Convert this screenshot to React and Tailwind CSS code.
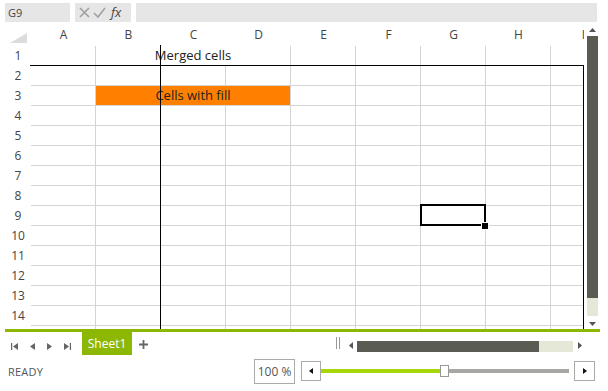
import React from 'react';

const COLS = ['A', 'B', 'C', 'D', 'E', 'F', 'G', 'H', 'I'];
const ROWS = Array.from({ length: 15 }, (_, i) => i + 1);

const cellCls = 'shrink-0 w-[65px] h-[20px] border-r border-b border-[#d4d4d4]';

function Row({ n }) {
  let cells;
  if (n === 1) {
    cells = (
      <>
        <div className={cellCls} />
        <div className="shrink-0 w-[195px] h-[20px] border-r border-b border-[#d4d4d4] flex items-center justify-center text-[13px] text-[#222]">
          Merged cells
        </div>
        {COLS.slice(4).map(c => <div key={c} className={cellCls} />)}
      </>
    );
  } else if (n === 3) {
    cells = (
      <>
        <div className={cellCls} />
        <div className="shrink-0 w-[195px] h-[20px] border-r border-b border-[#d4d4d4] bg-[#ff8000] flex items-center justify-center text-[13px] text-[#222]">
          Cells with fill
        </div>
        {COLS.slice(4).map(c => <div key={c} className={cellCls} />)}
      </>
    );
  } else {
    cells = COLS.map(c => <div key={c} className={cellCls} />);
  }
  return (
    <div className="flex h-[20px]">
      {/* row 15 is only a sliver in view, its number sits below the fold */}
      <div className="shrink-0 w-[31px] pl-[5px] text-center text-[12px] leading-[20px] text-[#444]">{n < 15 ? n : ''}</div>
      {cells}
    </div>
  );
}

export default function App() {
  return (
    <div className="relative w-[608px] h-[391px] bg-white overflow-hidden font-['Open_Sans','Noto_Sans',sans-serif] text-[#444]">
      {/* formula bar */}
      <div className="flex h-[24px] pt-[3px] pl-[5px]">
        <div className="w-[65px] h-[19px] bg-[#e6e6e6] pl-[3px] text-[11px] leading-[19px] text-[#444]">G9</div>
        <div className="ml-[5px] w-[56px] h-[19px] bg-[#e6e6e6] flex items-center pl-[4px] gap-[3px]">
          <svg width="11" height="11" viewBox="0 0 11 11"><path d="M1 1L10 10M10 1L1 10" stroke="#a0a0a0" strokeWidth="1.6" /></svg>
          <svg width="13" height="11" viewBox="0 0 13 11"><path d="M1 6L5 10L12 1" stroke="#a0a0a0" strokeWidth="1.6" fill="none" /></svg>
          <span className="ml-[2px] italic text-[13px] leading-[19px] text-[#444]">fx</span>
        </div>
        <div className="ml-[5px] w-[461px] h-[19px] bg-[#e6e6e6]" />
      </div>

      {/* sheet */}
      <div className="flex h-[305px]">
        <div className="relative w-[584px] overflow-hidden">
          <div className="flex h-[22px] items-center">
            <div className="shrink-0 w-[31px] h-[22px] flex items-end pl-[10px] pb-[3px]">
              <svg width="17" height="10" viewBox="0 0 17 10"><path d="M17 0L17 10L0 10Z" fill="#dcdcdc" /></svg>
            </div>
            {COLS.map(c => (
              <div key={c} className="shrink-0 w-[65px] text-center text-[12px] text-[#444]">{c}</div>
            ))}
          </div>
          {ROWS.map(n => <Row key={n} n={n} />)}

          {/* frame lines */}
          <div className="absolute left-[30px] top-[41px] w-[553px] h-px bg-black" />
          <div className="absolute left-[160px] top-[21px] w-px h-[290px] bg-black" />
          <div className="absolute left-[583px] top-[41px] w-px h-[270px] bg-black" />

          {/* selection G9 */}
          <div className="absolute left-[420px] top-[180px] w-[66px] h-[22px] border-2 border-black" />
          <div className="absolute left-[481px] top-[198px] w-[6px] h-[6px] bg-black border border-white box-content" />
        </div>

        {/* vertical scrollbar */}
        <div className="ml-[3px] w-[11px] flex flex-col items-center">
          <svg className="mt-[4px]" width="7" height="4" viewBox="0 0 7 4"><path d="M3.5 0L7 4L0 4Z" fill="#555" /></svg>
          <div className="mt-[4px] w-[11px] h-[262px] bg-[#5a5b53]" />
          <div className="w-[11px] h-[18px] bg-[#e5e8d6]" />
          <svg className="mt-[6px]" width="7" height="4" viewBox="0 0 7 4"><path d="M0 0L7 0L3.5 4Z" fill="#555" /></svg>
        </div>
      </div>

      {/* green divider */}
      <div className="ml-[5px] w-[595px] h-[3px] bg-[#8cb702]" />

      {/* tabs row */}
      <div className="flex h-[23px]">
        <div className="w-[82px] flex items-center pl-[11px] pt-[6px] gap-[12px]">
          <svg width="7" height="7" viewBox="0 0 7 7"><rect x="0" y="0" width="1.2" height="7" fill="#666" /><path d="M7 0L7 7L2 3.5Z" fill="#666" /></svg>
          <svg width="5" height="7" viewBox="0 0 5 7"><path d="M5 0L5 7L0 3.5Z" fill="#666" /></svg>
          <svg width="5" height="7" viewBox="0 0 5 7"><path d="M0 0L0 7L5 3.5Z" fill="#666" /></svg>
          <svg width="7" height="7" viewBox="0 0 7 7"><path d="M0 0L0 7L5 3.5Z" fill="#666" /><rect x="5.8" y="0" width="1.2" height="7" fill="#666" /></svg>
        </div>
        <div className="w-[50px] h-[23px] bg-[#8cb702] text-white text-[12px] leading-[23px] text-center">Sheet1</div>
        <svg className="ml-[7px] mt-[8px]" width="9" height="9" viewBox="0 0 9 9"><path d="M4.5 0V9M0 4.5H9" stroke="#666" strokeWidth="1.8" /></svg>

        <div className="ml-[188px] flex items-start pt-[5px]">
          <div className="flex gap-[2px] h-[12px]">
            <div className="w-px h-[12px] bg-[#999]" />
            <div className="w-px h-[12px] bg-[#999]" />
          </div>
          <svg className="ml-[9px] mt-[5px]" width="4" height="7" viewBox="0 0 4 7"><path d="M4 0L4 7L0 3.5Z" fill="#555" /></svg>
          <div className="ml-[4px] mt-[4px] flex w-[216px] h-[11px]">
            <div className="w-[182px] h-[11px] bg-[#5a5b53]" />
            <div className="flex-1 h-[11px] bg-[#e5e8d6]" />
          </div>
          <svg className="ml-[5px] mt-[5px]" width="4" height="7" viewBox="0 0 4 7"><path d="M0 0L0 7L4 3.5Z" fill="#555" /></svg>
        </div>
      </div>

      {/* status bar */}
      <div className="flex items-start h-[37px]">
        <div className="ml-[8px] mt-[9px] text-[11px] text-[#555] tracking-[0.2px]">READY</div>
        <div className="ml-[211px] mt-[4px] w-[41px] h-[25px] border border-[#aaa] flex items-center justify-center text-[12px] text-[#555]">100 %</div>
        <div className="ml-[6px] mt-[6px] w-[20px] h-[20px] border border-[#aaa] flex items-center justify-center">
          <svg width="4" height="6" viewBox="0 0 4 6"><path d="M4 0L4 6L0 3Z" fill="#111" /></svg>
        </div>
        <div className="mt-[14px] w-[119px] h-[4px] bg-[#a6d60a]" />
        <div className="mt-[10px] w-[9px] h-[12px] bg-white border border-[#999]" />
        <div className="mt-[14px] w-[120px] h-[4px] bg-[#a6a8a4]" />
        <div className="ml-[5px] mt-[6px] w-[21px] h-[20px] border border-[#aaa] flex items-center justify-center">
          <svg width="4" height="6" viewBox="0 0 4 6"><path d="M0 0L0 6L4 3Z" fill="#111" /></svg>
        </div>
      </div>
    </div>
  );
}
